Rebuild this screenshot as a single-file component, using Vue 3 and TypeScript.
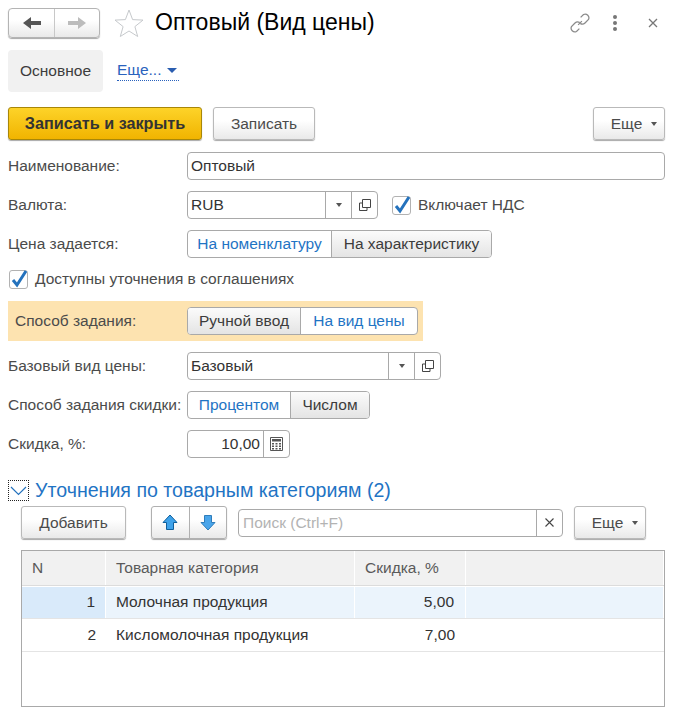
<script setup lang="ts">
interface Row {
  n: number;
  name: string;
  discount: string;
  selected?: boolean;
}

const rows: Row[] = [
  { n: 1, name: 'Молочная продукция', discount: '5,00', selected: true },
  { n: 2, name: 'Кисломолочная продукция', discount: '7,00' },
];
</script>

<template>
  <div class="page">
    <header class="head">
      <div class="nav">
        <button class="nav-btn nav-back">
          <svg width="18" height="14" viewBox="0 0 18 14"><path d="M0 7 8 1v4h10v4H8v4z" fill="#555" /></svg>
        </button>
        <button class="nav-btn">
          <svg width="18" height="14" viewBox="0 0 18 14"><path d="M18 7 10 1v4H0v4h10v4z" fill="#bcbcbc" /></svg>
        </button>
      </div>
      <svg class="star" width="30" height="28" viewBox="0 0 30 28">
        <path d="M15 1l3.6 9.6 10.4.5-8.100 6.500 2.800 9.900L15 22l-8.700 5.500 2.800-9.900L1 11.100l10.400-.5z" fill="#fff" stroke="#c6c9cc" />
      </svg>
      <h1 class="title">Оптовый (Вид цены)</h1>
      <div class="head-tools">
        <svg class="link-icon" width="20" height="20" viewBox="2 2 16 16" fill="none" stroke="#8a8a8a" stroke-width="1">
          <path d="M8.500 11.500l3-3" />
          <path d="M10.500 5.500l2.300-2.300a3 3 0 0 1 4 4l-2.800 2.800a3 3 0 0 1-3.800.3" />
          <path d="M9.500 14.500l-2.300 2.300a3 3 0 0 1-4-4l2.800-2.800a3 3 0 0 1 3.800-.3" />
        </svg>
        <span class="kebab"><i /><i /><i /></span>
        <svg width="10" height="10" viewBox="0 0 10 10" stroke="#777" stroke-width="1.300"><path d="M1 1l8 8M9 1l-8 8" /></svg>
      </div>
    </header>

    <nav class="tabs">
      <div class="tab">Основное</div>
      <div class="tab-more">
        <span>Еще...</span>
        <i class="tab-caret" />
      </div>
    </nav>

    <div class="cmdbar">
      <button class="btn btn-primary">Записать и закрыть</button>
      <button class="btn btn-save">Записать</button>
      <button class="btn btn-more">Еще <i class="caret" /></button>
    </div>

    <div class="field first">
      <label>Наименование:</label>
      <div class="input grow"><span class="value">Оптовый</span></div>
    </div>

    <div class="field">
      <label>Валюта:</label>
      <div class="input w-currency">
        <span class="value fill">RUB</span>
        <span class="cell"><i class="caret" /></span>
        <span class="cell">
          <svg width="14" height="14" viewBox="0 0 14 14" fill="none" stroke="#444"><path d="M4.500 1.500h8v8h-8z" /><path d="M4.500 5H1.500v7.500H9V9.500" /></svg>
        </span>
      </div>
      <span class="check vat"><svg width="20" height="20" viewBox="0 0 20 20"><path d="M4 10l4 5 9-14" fill="none" stroke="#2472bd" stroke-width="3" /></svg></span>
      <span class="check-label">Включает НДС</span>
    </div>

    <div class="field">
      <label>Цена задается:</label>
      <div class="segment">
        <span class="seg link w-nom">На номенклатуру</span>
        <span class="seg on w-char">На характеристику</span>
      </div>
    </div>

    <div class="check-row">
      <span class="check"><svg width="20" height="20" viewBox="0 0 20 20"><path d="M4 10l4 5 9-14" fill="none" stroke="#2472bd" stroke-width="3" /></svg></span>
      <span class="check-label">Доступны уточнения в соглашениях</span>
    </div>

    <div class="hilite">
      <label>Способ задания:</label>
      <div class="segment">
        <span class="seg on w-manual">Ручной ввод</span>
        <span class="seg link w-price">На вид цены</span>
      </div>
    </div>

    <div class="field tight">
      <label>Базовый вид цены:</label>
      <div class="input w-base">
        <span class="value fill">Базовый</span>
        <span class="cell"><i class="caret" /></span>
        <span class="cell">
          <svg width="14" height="14" viewBox="0 0 14 14" fill="none" stroke="#444"><path d="M4.500 1.500h8v8h-8z" /><path d="M4.500 5H1.500v7.500H9V9.500" /></svg>
        </span>
      </div>
    </div>

    <div class="field">
      <label>Способ задания скидки:</label>
      <div class="segment">
        <span class="seg link w-pct">Процентом</span>
        <span class="seg on w-num">Числом</span>
      </div>
    </div>

    <div class="field">
      <label>Скидка, %:</label>
      <div class="input w-disc">
        <span class="value fill right">10,00</span>
        <span class="cell">
          <svg width="13" height="14" viewBox="0 0 13 14"><path d="M.5.500h12v13H.5z" fill="#fff" stroke="#555" /><path d="M2 2h9v2.500H2z" fill="#555" /><path d="M2 6h2v1.500H2zM5.500 6h2v1.500h-2zM9 6h2v1.500H9zM2 8.500h2V10H2zM5.500 8.500h2V10h-2zM9 8.500h2V10H9zM2 11h2v1.500H2zM5.500 11h2v1.500h-2zM9 11h2v1.500H9z" fill="#555" /></svg>
        </span>
      </div>
    </div>

    <div class="group-head">
      <span class="toggle">
        <svg width="17" height="10" viewBox="0 0 17 10"><path d="M1 1l7.500 7.500L16 1" fill="none" stroke="#2472bd" stroke-width="1.200" /></svg>
      </span>
      <span class="group-title">Уточнения по товарным категориям (2)</span>
    </div>

    <div class="toolbar">
      <button class="btn btn-add">Добавить</button>
      <div class="arrows">
        <button class="arrow-btn">
          <svg width="16" height="17" viewBox="0 0 16 17"><path d="M8 1l7 7.500h-3.500v7h-7v-7H1z" fill="#3ea2ea" stroke="#0f5f9c" /></svg>
        </button>
        <button class="arrow-btn">
          <svg width="16" height="17" viewBox="0 0 16 17"><path d="M8 16L1 8.500h3.500v-7h7v7H15z" fill="#4aa5ea" stroke="#2f7dbb" /></svg>
        </button>
      </div>
      <div class="search">
        <span class="placeholder">Поиск (Ctrl+F)</span>
        <span class="search-clear">
          <svg width="9" height="9" viewBox="0 0 9 9" stroke="#444" stroke-width="1.100"><path d="M.5.500l8 8M8.500.500l-8 8" /></svg>
        </span>
      </div>
      <button class="btn btn-more-small">Еще <i class="caret" /></button>
    </div>

    <div class="grid">
      <div class="grid-head">
        <span class="col-n">N</span>
        <span class="col-name">Товарная категория</span>
        <span class="col-disc">Скидка, %</span>
        <span class="col-rest" />
      </div>
      <div v-for="row in rows" :key="row.n" class="grid-row" :class="{ selected: row.selected }">
        <span class="col-n num">{{ row.n }}</span>
        <span class="col-name">{{ row.name }}</span>
        <span class="col-disc num">{{ row.discount }}</span>
        <span class="col-rest" />
      </div>
    </div>
  </div>
</template>

<style>
html,
body {
  margin: 0;
  background: #fff;
}
</style>

<style scoped>
.page {
  width: 676px;
  height: 719px;
  overflow: hidden;
  box-sizing: border-box;
  padding: 7px 11px 0 8px;
  font-family: "Liberation Sans", Arial, sans-serif;
  font-size: 15.5px;
  color: #4b4b4b;
  background: #fff;
}

button {
  font-family: inherit;
  font-size: inherit;
  color: inherit;
  margin: 0;
  padding: 0;
  cursor: default;
}

i {
  display: block;
}

.head {
  display: flex;
  align-items: center;
  height: 31px;
}

.nav {
  display: flex;
  width: 92px;
  height: 30px;
  box-sizing: border-box;
  border: 1px solid #b4b4b4;
  border-radius: 4px;
  background: linear-gradient(#fff 40%, #e9e9e9);
  box-shadow: 0 1px 1px #a8a8a8;
}

.nav-btn {
  flex: 1;
  display: flex;
  align-items: center;
  justify-content: center;
  border: 0;
  background: none;
}

.nav-back {
  flex: 0 0 46px;
  border-right: 1px solid #c8c8c8;
}

.star {
  margin-left: 14px;
}

.title {
  margin: 0 0 0 11px;
  font-size: 23px;
  font-weight: 400;
  color: #000;
  line-height: 31px;
}

.head-tools {
  display: flex;
  align-items: center;
  margin-left: auto;
  margin-right: 7px;
}

.link-icon {
  margin-right: 23px;
}

.kebab {
  display: flex;
  flex-direction: column;
  gap: 2px;
  margin-right: 31px;
}

.kebab i {
  width: 4px;
  height: 4px;
  border-radius: 50%;
  background: #777;
}

.tabs {
  display: flex;
  align-items: center;
  height: 42px;
  margin-top: 12px;
}

.tab {
  width: 95px;
  height: 42px;
  line-height: 42px;
  text-align: center;
  background: #f1f1f1;
  border-radius: 4px;
  color: #3c3c3c;
}

.tab-more {
  display: flex;
  align-items: center;
  gap: 6px;
  width: 62px;
  margin-left: 14px;
  padding-bottom: 1px;
  color: #2a62bd;
  border-bottom: 1px dotted #2a62bd;
}

.tab-caret {
  border-left: 5px solid transparent;
  border-right: 5px solid transparent;
  border-top: 5px solid #2a5db0;
}

.cmdbar {
  display: flex;
  margin-top: 15px;
}

.btn {
  height: 33px;
  box-sizing: border-box;
  border: 1px solid #b9b9b9;
  border-radius: 3px;
  background: linear-gradient(#fff 40%, #e9e9e9);
  box-shadow: 0 1px 1px #a8a8a8;
}

.btn-primary {
  width: 194px;
  border-color: #a88708;
  background: linear-gradient(#fdd329, #f1b400);
  font-size: 16.2px;
  font-weight: 700;
  color: #333;
}

.btn-save {
  width: 102px;
  margin-left: 11px;
}

.btn-more,
.btn-more-small {
  display: flex;
  align-items: center;
  justify-content: center;
  gap: 9px;
  width: 72px;
  padding-left: 10px;
}

.btn-more {
  margin-left: auto;
}

.caret {
  width: 0;
  height: 0;
  border-left: 3.500px solid transparent;
  border-right: 3.500px solid transparent;
  border-top: 4px solid #555;
}

.field {
  display: flex;
  align-items: center;
  height: 28px;
  margin-top: 11px;
}

.field.first {
  margin-top: 12px;
}

.field.tight {
  margin-top: 11px;
}

.field label {
  flex: 0 0 179px;
  white-space: nowrap;
}

.input {
  display: flex;
  align-items: stretch;
  height: 28px;
  box-sizing: border-box;
  border: 1px solid #a9a9a9;
  border-radius: 4px;
  background: #fff;
  color: #333;
}

.grow {
  flex: 1;
}

.value {
  padding: 0 3px;
  line-height: 26px;
}

.fill {
  flex: 1;
}

.right {
  text-align: right;
}

.cell {
  flex: 0 0 26px;
  box-sizing: border-box;
  display: flex;
  align-items: center;
  justify-content: center;
  border-left: 1px solid #a9a9a9;
}

.w-currency {
  width: 191px;
}

.w-base {
  width: 254px;
}

.w-disc {
  width: 103px;
}

.check {
  display: flex;
  width: 19px;
  height: 19px;
  box-sizing: border-box;
  border: 1px solid #b2b2b2;
  border-radius: 3px;
  background: #fff;
}

.check svg {
  flex: none;
  margin: -1px;
}

.vat {
  margin-left: 14px;
}

.check-label {
  margin-left: 7px;
}

.check-row {
  display: flex;
  align-items: center;
  height: 22px;
  margin-top: 10px;
  padding-left: 1px;
}

.hilite {
  display: flex;
  align-items: center;
  width: 415px;
  height: 40px;
  margin-top: 11px;
  background: #fde3b0;
}

.hilite label {
  flex: 0 0 179px;
  padding-left: 7px;
  box-sizing: border-box;
}

.segment {
  display: flex;
  height: 28px;
  box-sizing: border-box;
  border: 1px solid #a9a9a9;
  border-radius: 4px;
  overflow: hidden;
  background: #fff;
}

.seg {
  box-sizing: border-box;
  text-align: center;
  line-height: 26px;
}

.seg + .seg {
  border-left: 1px solid #a9a9a9;
}

.seg.link {
  color: #1f74c4;
}

.seg.on {
  background: linear-gradient(#fbfbfb, #e4e4e4);
  color: #3c3c3c;
}

.w-nom {
  width: 143px;
}

.w-char {
  width: 160px;
}

.w-manual {
  width: 112px;
}

.w-price {
  width: 117px;
}

.w-pct {
  width: 102px;
}

.w-num {
  width: 79px;
}

.group-head {
  display: flex;
  align-items: center;
  height: 21px;
  margin-top: 22px;
}

.toggle {
  display: flex;
  align-items: center;
  justify-content: center;
  width: 21px;
  height: 21px;
  box-sizing: border-box;
  border: 1px dotted #222;
}

.group-title {
  margin-left: 6px;
  font-size: 19.6px;
  color: #1f74c4;
  white-space: nowrap;
}

.toolbar {
  display: flex;
  align-items: center;
  height: 33px;
  margin-top: 5px;
  margin-left: 13px;
}

.btn-add {
  width: 105px;
}

.arrows {
  display: flex;
  width: 76px;
  height: 33px;
  margin-left: 25px;
  box-sizing: border-box;
  border: 1px solid #b0b0b0;
  border-radius: 3px;
  background: linear-gradient(#fff 40%, #e9e9e9);
  box-shadow: 0 1px 1px #a8a8a8;
}

.arrow-btn {
  flex: 1;
  display: flex;
  align-items: center;
  justify-content: center;
  border: 0;
  background: none;
}

.arrow-btn + .arrow-btn {
  border-left: 1px solid #b0b0b0;
}

.search {
  display: flex;
  width: 325px;
  height: 28px;
  margin-left: 11px;
  box-sizing: border-box;
  border: 1px solid #a9a9a9;
  border-radius: 4px;
}

.placeholder {
  flex: 1;
  padding-left: 4px;
  line-height: 26px;
  color: #b3b3b3;
}

.search-clear {
  flex: 0 0 26px;
  box-sizing: border-box;
  display: flex;
  align-items: center;
  justify-content: center;
  border-left: 1px solid #a9a9a9;
}

.btn-more-small {
  margin-left: 11px;
}

.grid {
  width: 644px;
  height: 157px;
  margin-top: 11px;
  margin-left: 13px;
  box-sizing: border-box;
  border: 1px solid #a9a9a9;
}

.grid-head {
  display: flex;
  height: 35px;
  align-items: stretch;
  background: #f1f1f1;
  border-bottom: 1px solid #dcdcdc;
  box-sizing: border-box;
  color: #5a5a5a;
  line-height: 34px;
}

.grid-head span {
  border-right: 1px solid #fff;
}

.grid-row {
  display: flex;
  height: 33px;
  box-sizing: border-box;
  border-bottom: 1px solid #e4e4e4;
  line-height: 31px;
  color: #333;
}

.grid-row.selected {
  margin-top: 1px;
  height: 32px;
  line-height: 30px;
  background: #ebf4fc;
}

.grid-row.selected .col-n {
  background: #d9eafa;
}

.grid-row.selected span {
  border-right: 1px solid #fff;
}

.col-n {
  flex: 0 0 84px;
  box-sizing: border-box;
  padding-left: 10px;
}

.col-n.num {
  padding: 0 10px 0 0;
  text-align: right;
}

.col-name {
  flex: 0 0 249px;
  box-sizing: border-box;
  padding-left: 10px;
}

.col-disc {
  flex: 0 0 111px;
  box-sizing: border-box;
  padding-left: 10px;
}

.col-disc.num {
  padding: 0 11px 0 0;
  text-align: right;
}

.col-rest {
  flex: 1;
}
</style>
